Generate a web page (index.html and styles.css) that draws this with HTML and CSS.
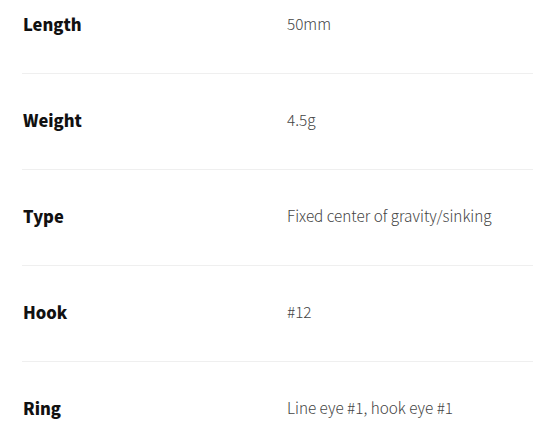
FILE: index.html
```html
<!DOCTYPE html>
<html>
<head>
<meta charset="utf-8">
<link rel="stylesheet" href="styles.css">
</head>
<body>
<div class="specs">
  <div class="row"><div class="label">Length</div><div class="value">50mm</div></div>
  <div class="row"><div class="label">Weight</div><div class="value">4.5g</div></div>
  <div class="row"><div class="label">Type</div><div class="value">Fixed center of gravity/sinking</div></div>
  <div class="row"><div class="label">Hook</div><div class="value">#12</div></div>
  <div class="row"><div class="label">Ring</div><div class="value">Line eye #1, hook eye #1</div></div>
</div>
</body>
</html>
```
FILE: styles.css
```css
html, body {
  margin: 0;
  padding: 0;
  background: #fff;
  overflow: hidden;
}
.specs {
  margin-top: -22px;
  padding-left: 22px;
}
.row {
  display: grid;
  grid-template-columns: 265px 1fr;
  align-items: center;
  height: 95px;
  border-bottom: 1.5px solid #efefef;
}
.label {
  font-family: "Noto Sans CJK JP", "Liberation Sans", sans-serif;
  font-weight: 900;
  font-size: 16.5px;
  color: #111;
  padding-left: 1px;
  margin-top: -3px;
}
.value {
  font-family: "Noto Sans CJK JP", "Liberation Sans", sans-serif;
  font-weight: 300;
  font-size: 15.3px;
  color: #444;
  margin-top: -6px;
}
```
